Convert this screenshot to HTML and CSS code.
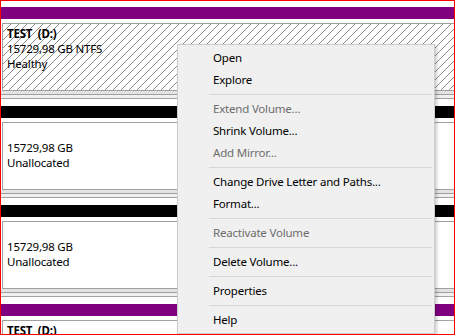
FILE: index.html
```html
<!DOCTYPE html>
<html lang="en">
<head>
    <meta charset="UTF-8">
    <title>Disk Management</title>
    <link rel="stylesheet" href="styles.css">
</head>
<body>
    <div class="frame">
        <div class="disk">
            <div class="bar primary"></div>
            <div class="volume selected">
                <div class="name">TEST  (D:)</div>
                <div>15729,98 GB NTFS</div>
                <div>Healthy</div>
            </div>
            <div class="divider"></div>
        </div>
        <div class="disk">
            <div class="bar unalloc"></div>
            <div class="volume">
                <div class="name"></div>
                <div>15729,98 GB</div>
                <div>Unallocated</div>
            </div>
            <div class="divider"></div>
        </div>
        <div class="disk">
            <div class="bar unalloc"></div>
            <div class="volume">
                <div class="name"></div>
                <div>15729,98 GB</div>
                <div>Unallocated</div>
            </div>
            <div class="divider"></div>
        </div>
        <div class="disk">
            <div class="bar primary"></div>
            <div class="volume">
                <div class="name">TEST  (D:)</div>
                <div>15729,98 GB NTFS</div>
                <div>Healthy</div>
            </div>
        </div>

        <ul class="menu">
            <li>Open</li>
            <li>Explore</li>
            <li class="sep"></li>
            <li class="disabled">Extend Volume...</li>
            <li>Shrink Volume...</li>
            <li class="disabled">Add Mirror...</li>
            <li class="sep"></li>
            <li>Change Drive Letter and Paths...</li>
            <li>Format...</li>
            <li class="sep"></li>
            <li class="disabled">Reactivate Volume</li>
            <li class="sep"></li>
            <li>Delete Volume...</li>
            <li class="sep"></li>
            <li>Properties</li>
            <li class="sep"></li>
            <li>Help</li>
        </ul>
    </div>
</body>
</html>
```

FILE: styles.css
```css
body {
    margin: 0;
    background-color: #fff;
    font-family: "Segoe UI", "Noto Sans", "Open Sans", sans-serif;
    font-size: 11.5px;
    letter-spacing: -0.2px;
    color: #000;
}

.frame {
    position: relative;
    width: 455px;
    height: 335px;
    box-sizing: border-box;
    border: 1px solid #f00;
    padding-top: 6px;
    overflow: hidden;
}

.disk {
    display: flex;
    flex-direction: column;
}

.bar {
    height: 12px;
    margin-bottom: 4px;
}

.bar.primary {
    background-color: #800080;
}

.bar.unalloc {
    background-color: #000;
}

.volume {
    height: 64px;
    margin-left: 1px;
    padding: 2px 0 0 4px;
    border: 1px solid #a0a0a0;
    border-right: none;
    background-color: #fff;
    line-height: 15px;
}

.volume .name {
    height: 15px;
    font-weight: bold;
    white-space: pre;
}

.volume.selected {
    background-image: linear-gradient(to bottom right, transparent calc(50% - 0.6px), #8c8c8c 50%, transparent calc(50% + 0.6px));
    background-size: 8px 8px;
}

.divider {
    height: 15px;
    background-color: #fff;
    background-image: linear-gradient(#e3e3e3 0 3px, #a0a0a0 3px 4px, #f0f0f0 4px 7px, #a0a0a0 7px 8px, #fff 8px);
}

.menu {
    position: absolute;
    left: 176px;
    top: 43px;
    width: 256px;
    margin: 0;
    padding: 2px 0;
    list-style: none;
    background-color: #f0f0f0;
    border: 1px solid #cccccc;
    box-shadow: 2px 2px 3px rgba(0, 0, 0, 0.2);
}

.menu li {
    height: 22px;
    line-height: 22px;
    padding-left: 35px;
    white-space: nowrap;
}

.menu li.disabled {
    color: #6d6d6d;
}

.menu li.sep {
    height: 1px;
    margin: 3px 2px 3px 31px;
    padding: 0;
    background-color: #d7d7d7;
}
```
